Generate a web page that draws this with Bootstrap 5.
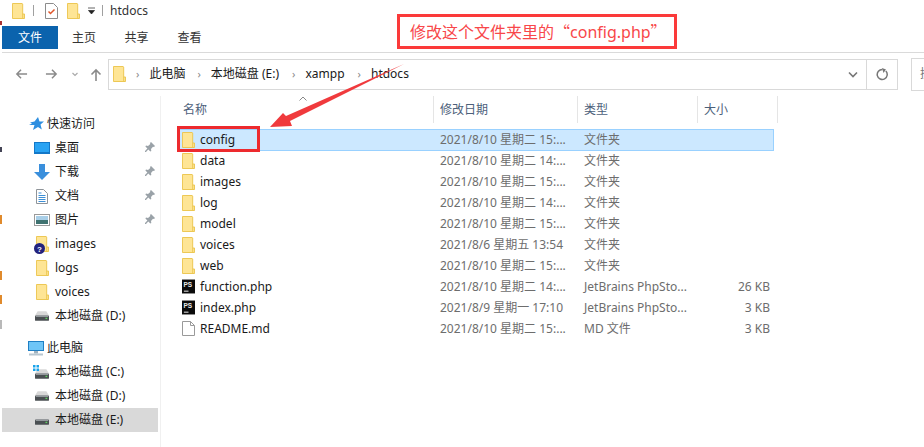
<!DOCTYPE html>
<html lang="zh">
<head>
    <meta charset="UTF-8">
    <meta name="viewport" content="width=device-width, initial-scale=1.0">
    <title>htdocs</title>
    <link rel="stylesheet" href="https://cdn.jsdelivr.net/npm/bootstrap@5.3.0/dist/css/bootstrap.min.css">
    <style>
        html, body {
            height: 447px;
            overflow: hidden;
            background: #fff;
        }
        body {
            font-family: "Noto Sans", "Noto Sans CJK SC", sans-serif;
            font-size: 12px;
            line-height: 16px;
            color: #1a1a1a;
            position: relative;
        }
        .title-bar { height: 26px; padding-left: 12px; padding-bottom: 5px; }
        .title-sep { width: 1px; height: 11px; background: #a0a0a0; }
        .t-sep1 { margin-left: 8px; }
        .t-doc { margin-left: 11px; }
        .t-folder2 { margin-left: 9px; }
        .t-drop { margin-left: 8px; }
        .t-sep2 { margin-left: 6px; }
        .title-text { font-size: 12px; margin-left: 7px; color: #333; }
        .tab-row { height: 27px; margin-left: 2px; border-bottom: 1px solid #dadada; align-items: flex-start; }
        .tab-item { height: 23px; display: flex; align-items: center; justify-content: center; color: #333; }
        .tab-file { width: 56px; background: #0b63ad; color: #fff; }
        .tab-home { width: 52px; }
        .tab-share { width: 53px; }
        .tab-view { width: 53px; }
        .addr-row { height: 32px; margin-top: 5px; }
        .nav-arrows { width: 108px; flex: none; padding-left: 15px; gap: 17px; color: #8a8a8a; }
        .nav-drop { margin-left: -3px; }
        .nav-up { margin-left: -5px; }
        .addr-box { width: 790px; flex: none; height: 31px; border: 1px solid #d9d9d9; padding-left: 4px; }
        .crumb-sep { color: #8a8a8a; font-size: 11px; margin: 0 10px 0 12px; }
        .crumb-first { margin-left: 10px; }
        .crumb-wide { margin-left: 13px; }
        .addr-end { width: 31px; height: 29px; border-left: 1px solid #d9d9d9; }
        .addr-chevron { margin-left: auto; margin-right: 8px; }
        .search-box { width: 13px; flex: none; height: 31px; margin-left: 13px; border: 1px solid #d9d9d9; border-right: 0; padding-left: 8px; line-height: 29px; color: #777; overflow: hidden; box-sizing: content-box; }
        .main-area { height: 359px; margin-top: 6px; }
        .side-pane { width: 161px; flex: none; border-right: 1px solid #f0f0f0; padding-top: 16px; padding-left: 2px; }
        .side-row { height: 24px; width: 156px; display: flex; align-items: center; position: relative; }
        .side-gap { margin-top: 8px; }
        .side-row.on { background: #d9d9d9; }
        .side-ic { width: 18px; display: flex; justify-content: center; margin-left: 31px; margin-right: 4px; flex: none; }
        .side-top .side-ic { margin-left: 25px; margin-right: 2px; }
        .side-pin { position: absolute; left: 143px; top: 6px; }
        .side-badge { position: absolute; left: 32px; top: 11px; }
        .list-pane { flex: 1; padding-left: 16px; }
        .head-row { height: 27px; display: flex; color: #4c607a; position: relative; }
        .head-cell { display: flex; align-items: center; padding-left: 6px; border-right: 1px solid #e5e5e5; }
        .col-name { width: 257px; }
        .col-date { width: 144px; }
        .col-type { width: 120px; }
        .col-size { width: 80px; }
        .sort-mark { position: absolute; left: 122px; top: 0; }
        .file-list { margin-top: 6px; width: 597px; }
        .file-row { height: 21px; display: flex; align-items: center; border: 1px solid transparent; }
        .file-row.on { height: 22px; background: #cce8ff; border: 1px solid #99d1ff; margin-bottom: -1px; }
        .file-ic { width: 13px; margin-left: 4px; margin-right: 5px; display: flex; flex: none; }
        .f-name { width: 240px; flex: none; white-space: nowrap; }
        .f-date { width: 144px; flex: none; color: #6d6d6d; white-space: nowrap; }
        .f-type { width: 120px; flex: none; color: #6d6d6d; white-space: nowrap; }
        .f-size { width: 66px; flex: none; color: #6d6d6d; text-align: right; }
        .note-box { position: absolute; left: 397px; top: 14px; width: 280px; height: 35px; border: 3px solid #fb3a3a; background: #fff; color: #f8474a; font-size: 16px; line-height: 28px; padding-left: 10px; white-space: nowrap; }
        .note-quote { font-family: "Noto Sans CJK SC", sans-serif; }
        .pick-box { position: absolute; left: 177px; top: 126px; width: 83px; height: 26px; border: 3px solid #ed2a2e; }
        .note-arrow { position: absolute; left: 0; top: 0; }
        .edge-bit { position: absolute; left: 0; width: 2px; }
        .edge-a { top: 21px; height: 4px; background: #a33; }
        .edge-b { top: 147px; height: 5px; background: #445; }
        .edge-c { top: 215px; height: 9px; background: #e08a2c; }
        .edge-d { top: 271px; height: 9px; background: #e08a2c; }
        .edge-e { top: 295px; height: 9px; background: #e08a2c; }
        .edge-f { top: 320px; height: 9px; background: #b9b9b9; }
    </style>
</head>
<body>
    <svg width="0" height="0" class="position-absolute">
        <symbol id="folder" viewBox="0 0 14 16" preserveAspectRatio="none">
            <path d="M.5 .5h10.500l.5.5v10h2v4.500H.5z" fill="#fee595" stroke="#ecc650"/>
            <path d="M11.500 11v4.500" stroke="#ecc650"/>
        </symbol>
        <symbol id="pin" viewBox="0 0 10 11">
            <path d="M6 0l4 4-1 1-1-.3L6 7l.3 2-1 .6-2-2L1 10H0V9l2.400-2.400-2-2 .6-1 2 .3L5.300 2 5 1z" fill="#9aa2a8"/>
        </symbol>
        <symbol id="drive" viewBox="0 0 16 11">
            <path d="M3 0h10l3 5H0z" fill="#d8d8d8"/>
            <rect y="5" width="16" height="6" rx="1" fill="#4a4f52"/>
            <rect x="1" y="5" width="14" height="1.500" fill="#9da3a6"/>
            <rect x="12" y="7.500" width="2" height="1.500" fill="#5ed15e"/>
        </symbol>
    </svg>

    <div class="title-bar d-flex align-items-center">
        <svg width="13" height="16"><use href="#folder"/></svg>
        <span class="title-sep t-sep1"></span>
        <svg width="13" height="16" class="t-doc" viewBox="0 0 13 16"><path d="M.5.500h8l4 4v11H.500z" fill="#fff" stroke="#8c8c8c"/><path d="M3.500 8.500l2 2 4-4" fill="none" stroke="#e0562b" stroke-width="1.500"/></svg>
        <svg width="13" height="16" class="t-folder2"><use href="#folder"/></svg>
        <svg width="8" height="8" class="t-drop" viewBox="0 0 8 8"><path d="M0 1h7M.5 3.500h6L3.500 7z" fill="#222" stroke="#222" stroke-width=".7"/></svg>
        <span class="title-sep t-sep2"></span>
        <span class="title-text">htdocs</span>
    </div>

    <div class="tab-row d-flex">
        <div class="tab-item tab-file">文件</div>
        <div class="tab-item tab-home">主页</div>
        <div class="tab-item tab-share">共享</div>
        <div class="tab-item tab-view">查看</div>
    </div>

    <div class="addr-row d-flex align-items-center">
        <div class="nav-arrows d-flex align-items-center">
            <svg width="13" height="12" viewBox="0 0 14 12"><path d="M13 6H2M6.500 1.500L2 6l4.500 4.500" fill="none" stroke="#8a8a8a" stroke-width="1.600"/></svg>
            <svg width="13" height="12" viewBox="0 0 14 12"><path d="M1 6h11M7.500 1.500L12 6l-4.500 4.500" fill="none" stroke="#8a8a8a" stroke-width="1.600"/></svg>
            <svg width="6" height="5" class="nav-drop" viewBox="0 0 6 5"><path d="M.5 1L3 3.500 5.500 1" fill="none" stroke="#aaa" stroke-width="1.200"/></svg>
            <svg width="12" height="13" class="nav-up" viewBox="0 0 12 13"><path d="M6 13V2M1.500 6.500L6 2l4.500 4.500" fill="none" stroke="#8a8a8a" stroke-width="1.600"/></svg>
        </div>
        <div class="addr-box d-flex align-items-center">
            <svg width="13" height="16"><use href="#folder"/></svg>
            <span class="crumb-sep crumb-first">›</span><span>此电脑</span>
            <span class="crumb-sep">›</span><span>本地磁盘 (E:)</span>
            <span class="crumb-sep crumb-wide">›</span><span>xampp</span>
            <span class="crumb-sep crumb-wide">›</span><span>htdocs</span>
            <svg class="addr-chevron" width="10" height="7" viewBox="0 0 10 7"><path d="M1 1.500l4 4 4-4" fill="none" stroke="#777" stroke-width="1.600"/></svg>
            <div class="addr-end d-flex align-items-center justify-content-center">
                <svg width="13" height="13" viewBox="0 0 13 13"><path d="M9.800 3A5 5 0 1 1 6.500 1.500" fill="none" stroke="#777" stroke-width="1.500"/><path d="M6 0l4 1.500L7.500 5z" fill="#777"/></svg>
            </div>
        </div>
        <div class="search-box">搜</div>
    </div>

    <div class="main-area d-flex">
        <div class="side-pane">
            <div class="side-row side-top">
                <span class="side-ic"><svg width="15" height="14" viewBox="0 0 15 14"><path d="M9 0l1.500 4.500H15l-3.500 3 1.300 5L9 10l-5 3 1.500-5H0l3-1.500L1 5.500l4.500-1z" fill="#2f8fe0"/></svg></span>快速访问
            </div>
            <div class="side-row">
                <span class="side-ic"><svg width="16" height="12" viewBox="0 0 16 12"><rect width="16" height="12" fill="#1378c8"/><rect x="1" y="1" width="14" height="9" fill="#29a3f3"/></svg></span>桌面
                <svg class="side-pin" width="10" height="11"><use href="#pin"/></svg>
            </div>
            <div class="side-row">
                <span class="side-ic"><svg width="16" height="16" viewBox="0 0 16 16"><path d="M5 0h6v8h5l-8 8-8-8h5z" fill="#3a8fdc"/></svg></span>下载
                <svg class="side-pin" width="10" height="11"><use href="#pin"/></svg>
            </div>
            <div class="side-row">
                <span class="side-ic"><svg width="12" height="15" viewBox="0 0 12 15"><path d="M.5.500h7l4 4v10H.500z" fill="#fff" stroke="#8f9499"/><path d="M2.500 4h3M2.500 6.500h7M2.500 8.500h7M2.500 10.500h7M2.500 12.500h7" stroke="#3d8fd6"/></svg></span>文档
                <svg class="side-pin" width="10" height="11"><use href="#pin"/></svg>
            </div>
            <div class="side-row">
                <span class="side-ic"><svg width="16" height="12" viewBox="0 0 16 12"><rect x=".5" y=".5" width="15" height="11" fill="#fff" stroke="#9a9a9a"/><rect x="2" y="2" width="12" height="4" fill="#a9cfe8"/><rect x="2" y="6" width="12" height="4" fill="#3f7270"/></svg></span>图片
                <svg class="side-pin" width="10" height="11"><use href="#pin"/></svg>
            </div>
            <div class="side-row">
                <span class="side-ic"><svg width="13" height="16"><use href="#folder"/></svg></span>images
                <svg class="side-badge" width="11" height="11" viewBox="0 0 11 11"><circle cx="5.500" cy="5.500" r="5.500" fill="#23237e"/><text x="5.500" y="8.500" text-anchor="middle" font-family="Liberation Sans, sans-serif" font-size="8" font-weight="700" fill="#fff">?</text></svg>
            </div>
            <div class="side-row">
                <span class="side-ic"><svg width="13" height="16"><use href="#folder"/></svg></span>logs
            </div>
            <div class="side-row">
                <span class="side-ic"><svg width="13" height="16"><use href="#folder"/></svg></span>voices
            </div>
            <div class="side-row">
                <span class="side-ic"><svg width="14" height="10"><use href="#drive"/></svg></span>本地磁盘 (D:)
            </div>
            <div class="side-row side-top side-gap">
                <span class="side-ic"><svg width="16" height="15" viewBox="0 0 16 15"><rect width="16" height="10" fill="#1f7fc4"/><rect x="1" y="1" width="14" height="8" fill="#6ec5f7"/><rect x="6" y="10" width="4" height="2.500" fill="#9fb2bf"/><rect x="1" y="12.500" width="14" height="2" fill="#b8c6d0"/></svg></span>此电脑
            </div>
            <div class="side-row">
                <span class="side-ic position-relative"><svg width="14" height="10" class="mt-1"><use href="#drive"/></svg><svg class="position-absolute top-0 start-0" width="6" height="6" viewBox="0 0 6 6"><path d="M0 0h2.500v2.500H0zM3.500 0H6v2.500H3.500zM0 3.500h2.500V6H0zM3.500 3.500H6V6H3.500z" fill="#19a3ea"/></svg></span>本地磁盘 (C:)
            </div>
            <div class="side-row">
                <span class="side-ic"><svg width="14" height="10"><use href="#drive"/></svg></span>本地磁盘 (D:)
            </div>
            <div class="side-row on">
                <span class="side-ic"><svg width="14" height="10"><use href="#drive"/></svg></span>本地磁盘 (E:)
            </div>
        </div>

        <div class="list-pane">
            <div class="head-row">
                <svg class="sort-mark" width="8" height="5" viewBox="0 0 8 5"><path d="M.5 4.500L4 1l3.500 3.500" fill="none" stroke="#888"/></svg>
                <div class="head-cell col-name">名称</div>
                <div class="head-cell col-date">修改日期</div>
                <div class="head-cell col-type">类型</div>
                <div class="head-cell col-size">大小</div>
            </div>
            <div class="file-list" id="fileList"></div>
        </div>
    </div>

    <span class="edge-bit edge-a"></span>
    <span class="edge-bit edge-b"></span>
    <span class="edge-bit edge-c"></span>
    <span class="edge-bit edge-d"></span>
    <span class="edge-bit edge-e"></span>
    <span class="edge-bit edge-f"></span>

    <svg class="note-arrow" width="924" height="447" viewBox="0 0 924 447">
        <path d="M270 127L283 113L286 116L404 64L290 121L292 126Z" fill="#f03a3d"/>
    </svg>
    <div class="pick-box"></div>
    <div class="note-box">修改这个文件夹里的<span class="note-quote">“</span>config.php<span class="note-quote">”</span></div>

    <script>
        const archivos = [
            { n: 'config', d: '2021/8/10 星期二 15:...', t: '文件夹', s: '', i: 'folder', on: true },
            { n: 'data', d: '2021/8/10 星期二 14:...', t: '文件夹', s: '', i: 'folder' },
            { n: 'images', d: '2021/8/10 星期二 15:...', t: '文件夹', s: '', i: 'folder' },
            { n: 'log', d: '2021/8/10 星期二 14:...', t: '文件夹', s: '', i: 'folder' },
            { n: 'model', d: '2021/8/10 星期二 15:...', t: '文件夹', s: '', i: 'folder' },
            { n: 'voices', d: '2021/8/6 星期五 13:54', t: '文件夹', s: '', i: 'folder' },
            { n: 'web', d: '2021/8/10 星期二 15:...', t: '文件夹', s: '', i: 'folder' },
            { n: 'function.php', d: '2021/8/10 星期二 14:...', t: 'JetBrains PhpSto...', s: '26 KB', i: 'ps' },
            { n: 'index.php', d: '2021/8/9 星期一 17:10', t: 'JetBrains PhpSto...', s: '3 KB', i: 'ps' },
            { n: 'README.md', d: '2021/8/10 星期二 15:...', t: 'MD 文件', s: '3 KB', i: 'doc' }
        ];

        const iconos = {
            folder: '<svg width="13" height="16"><use href="#folder"/></svg>',
            ps: '<svg width="14" height="15" viewBox="0 0 14 15"><rect width="14" height="15" fill="#0b0b0b"/><text x="1.500" y="8" font-family="Liberation Sans, sans-serif" font-size="7" font-weight="700" fill="#e8e8e8">PS</text><rect x="2" y="12" width="5" height="1" fill="#fff"/></svg>',
            doc: '<svg width="13" height="15" viewBox="0 0 13 15"><path d="M.5.500h8l4 4v10H.500z" fill="#fff" stroke="#9a9a9a"/><path d="M8.500.500v4h4" fill="none" stroke="#9a9a9a"/></svg>'
        };

        const lista = document.getElementById('fileList');
        archivos.forEach(a => {
            const fila = document.createElement('div');
            fila.className = 'file-row' + (a.on ? ' on' : '');
            fila.innerHTML = `
                <span class="file-ic">${iconos[a.i]}</span>
                <span class="f-name">${a.n}</span>
                <span class="f-date">${a.d}</span>
                <span class="f-type">${a.t}</span>
                <span class="f-size">${a.s}</span>
            `;
            lista.appendChild(fila);
        });
    </script>
    <script src="https://cdn.jsdelivr.net/npm/bootstrap@5.3.0/dist/js/bootstrap.bundle.min.js"></script>
</body>
</html>
